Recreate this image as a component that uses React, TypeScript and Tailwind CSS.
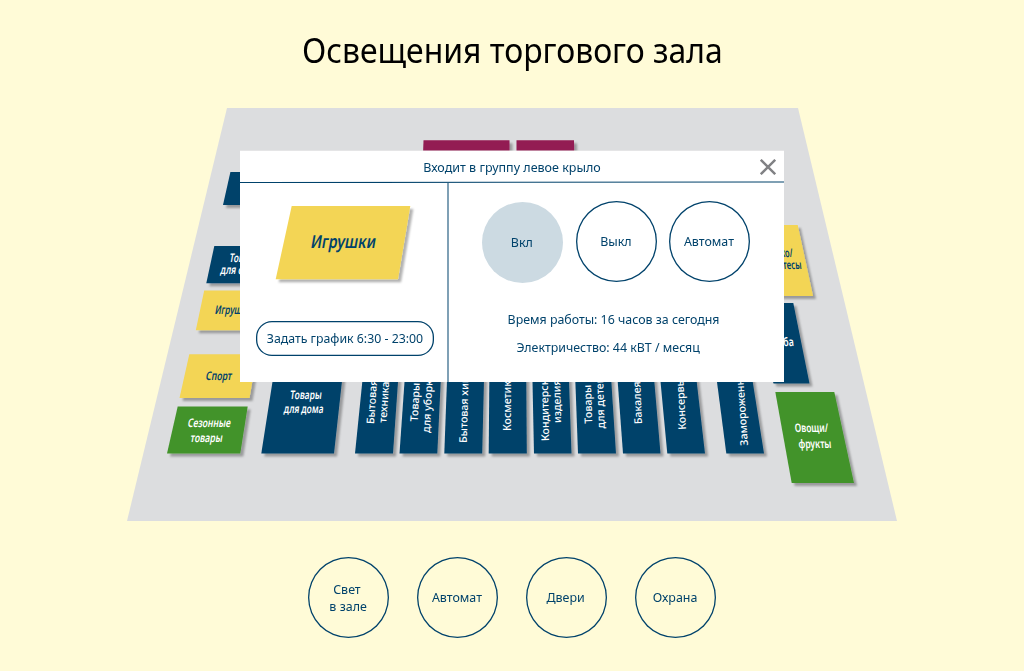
const NAVY = "#00426b";
const YELLOW = "#f3d554";
const GREEN = "#43932c";
const PLUM = "#931c52";

type Tile = { points: string; fill: string };

const tiles: Tile[] = [
  { points: "423.5,140.3 509.5,140.3 509.5,170 422.5,170", fill: PLUM },
  { points: "516.5,140.3 574,140.3 574.5,170 516.5,170", fill: PLUM },
  { points: "230.4,172 290,172 284,205 223,205", fill: NAVY },
  { points: "214.3,246 280,246 273,283.3 206.3,283.3", fill: NAVY },
  { points: "204.2,290.4 270,290.4 262,330.2 195.8,330.2", fill: YELLOW },
  { points: "189.3,354.2 257,354.2 249.5,398 179.5,398", fill: YELLOW },
  { points: "177.7,406.5 247.7,406.5 240.3,453.5 167,453.5", fill: GREEN },
  { points: "274,372 343,372 334,453.5 261.3,453.5", fill: NAVY },
  { points: "363.3,372 398.7,372 393,453.5 355,453.5", fill: NAVY },
  { points: "405.2,372 441.2,372 437.3,453.5 399.5,453.5", fill: NAVY },
  { points: "447.3,372 484.2,372 482.2,453.5 444.3,453.5", fill: NAVY },
  { points: "489.4,372 526.2,372 526.8,453.5 488.7,453.5", fill: NAVY },
  { points: "532.3,372 568.7,372 571.5,453.5 534,453.5", fill: NAVY },
  { points: "575,372 610.7,372 616,453.5 578,453.5", fill: NAVY },
  { points: "617,372 653.5,372 660.5,453.5 623,453.5", fill: NAVY },
  { points: "659.6,372 695.6,372 705,453.5 667.3,453.5", fill: NAVY },
  { points: "715.7,372 751.2,372 764,453.5 726.3,453.5", fill: NAVY },
  { points: "740,225 797.7,225 813,296 750,296", fill: YELLOW },
  { points: "750,303 793.3,303 809.5,383.5 773.5,383.5", fill: NAVY },
  { points: "775.3,392 834.3,392 854,483 791.7,483", fill: GREEN },
];

type Label = { x: number; y: number; text: string; length: number; lean: number; fill?: string; end?: boolean };

const labels: Label[] = [
  { x: 229, y: 261.7, text: "Товары", length: 30.5, lean: -10 },
  { x: 220, y: 273.9, text: "для отдыха", length: 48, lean: -10 },
  { x: 214.5, y: 313.6, text: "Игрушки", length: 37, lean: -10, fill: NAVY },
  { x: 205.3, y: 379.7, text: "Спорт", length: 26, lean: -10, fill: NAVY },
  { x: 187.2, y: 427, text: "Сезонные", length: 43, lean: -10 },
  { x: 190, y: 442, text: "товары", length: 32, lean: -10 },
  { x: 289.8, y: 398.9, text: "Товары", length: 31.5, lean: -7 },
  { x: 283.5, y: 413.2, text: "для дома", length: 39.5, lean: -7 },
  { x: 793, y: 256.5, text: "Молоко/", length: 33, lean: 6, fill: NAVY, end: true },
  { x: 802, y: 268.7, text: "деликатесы", length: 47, lean: 6, fill: NAVY, end: true },
  { x: 794, y: 346, text: "Рыба", length: 23, lean: 5, end: true },
  { x: 794.9, y: 432.2, text: "Овощи/", length: 33.5, lean: 4 },
  { x: 798.7, y: 447.7, text: "фрукты", length: 33, lean: 4 },
];

const uprights = [
  { x: 374, y: 424.3, text: "Бытовая", turn: -86 },
  { x: 386.3, y: 423, text: "техника", turn: -86 },
  { x: 417.7, y: 421.7, text: "Товары", turn: -87 },
  { x: 429.8, y: 433, text: "для уборки", turn: -87 },
  { x: 466.8, y: 443, text: "Бытовая химия", turn: -88.5 },
  { x: 511, y: 431, text: "Косметика", turn: -90 },
  { x: 549, y: 441, text: "Кондитерские", turn: -91 },
  { x: 561, y: 423, text: "изделия", turn: -91 },
  { x: 592.3, y: 423.5, text: "Товары", turn: -92 },
  { x: 604.8, y: 428.5, text: "для детей", turn: -92 },
  { x: 642, y: 424, text: "Бакалея", turn: -92.5 },
  { x: 686, y: 429.5, text: "Консервы", turn: -93 },
  { x: 748, y: 445.5, text: "Замороженные", turn: -94 },
];

function FloorPlan() {
  return (
    <svg viewBox="127 108 770 413" className="block h-[413px] w-[770px]" fontFamily="'Noto Sans', sans-serif">
      <defs>
        <filter id="tile-shadow" x="-10%" y="-10%" width="130%" height="130%">
          <feDropShadow dx="3" dy="3" stdDeviation="0.8" floodColor="#000" floodOpacity="0.3" />
        </filter>
      </defs>
      <polygon points="227,108 798,108 897,521 127,521" fill="#dcdddf" />
      {tiles.map((t) => (
        <polygon key={t.points} points={t.points} fill={t.fill} filter="url(#tile-shadow)" />
      ))}
      {labels.map((l) => (
        <text
          key={l.text + l.x}
          transform={`translate(${l.x} ${l.y}) skewX(${l.lean})`}
          fontSize="11.8"
          fontWeight="600"
          textLength={l.length}
          lengthAdjust="spacingAndGlyphs"
          textAnchor={l.end ? "end" : "start"}
          fill={l.fill ?? "#fff"}
        >
          {l.text}
        </text>
      ))}
      {uprights.map((u) => (
        <text
          key={u.text + u.x}
          transform={`translate(${u.x} ${u.y}) rotate(${u.turn})`}
          fontSize="10.6"
          fontWeight="500"
          fill="#fff"
        >
          {u.text}
        </text>
      ))}
    </svg>
  );
}

function RoundButton({ lines, active = false }: { lines: string[]; active?: boolean }) {
  return (
    <button
      className={
        active
          ? "flex size-[81px] translate-y-px flex-col items-center justify-center rounded-full bg-[#ccdae2] pr-px text-[13.4px] leading-[17px]"
          : "flex size-[81px] flex-col items-center justify-center rounded-full pr-px text-[13.4px] leading-[17px] shadow-[inset_0_0_0_1.3px_#00426b]"
      }
    >
      {lines.map((line) => (
        <span key={line} className="scale-x-[0.93] whitespace-nowrap first:not-last:pr-[3px] last:not-first:pl-px">{line}</span>
      ))}
    </button>
  );
}

function GroupDialog() {
  return (
    <div className="absolute left-[113px] top-[43px] flex h-[231px] w-[544px] flex-col bg-white shadow-[0_-0.5px_0_#ededed]">
      <header className="flex h-8 shrink-0 flex-col text-[13.4px]">
        <div className="relative flex h-[30px] items-center justify-center pt-0.5">
          <span className="scale-x-[0.935] whitespace-nowrap">Входит в группу левое крыло</span>
          <button className="absolute right-2 top-2" aria-label="Закрыть">
            <svg viewBox="0 0 16 16" className="block size-4" stroke="#808184" strokeWidth="2.4">
              <path d="M0.8 0.8L15.2 15.2M15.2 0.8L0.8 15.2" />
            </svg>
          </button>
        </div>
        <svg viewBox="0 0 544 2" className="block h-0.5 w-full">
          <line x1="-1" y1="1.6" x2="545" y2="1" stroke={NAVY} strokeWidth="1.1" />
        </svg>
      </header>
      <div className="flex grow">
        <section className="flex w-[209px] flex-col border-r-2 border-[#7fa0b5] pl-4">
          <svg viewBox="270 200 150 90" className="ml-[14px] mt-[17px] block h-[90px] w-[150px]" fontFamily="'Noto Sans', sans-serif">
            <polygon points="291.7,206 410.3,206 398,279.3 275.7,279.3" fill={YELLOW} filter="url(#tile-shadow)" />
            <text
              transform="translate(310 248) skewX(-10)"
              fontSize="18"
              fontWeight="600"
              textLength="65"
              lengthAdjust="spacingAndGlyphs"
              fill={NAVY}
            >
              Игрушки
            </text>
          </svg>
          <button className="mt-[31px] flex h-[35px] w-[178px] items-center justify-center whitespace-nowrap rounded-[16px] text-[13.4px] shadow-[inset_0_0_0_1.3px_#00426b]">
            <span className="scale-x-[0.92]">Задать график 6:30 - 23:00</span>
          </button>
        </section>
        <section className="flex grow flex-col items-center pr-px">
          <div className="mt-[18px] flex gap-[12.5px]">
            <RoundButton lines={["Вкл"]} active />
            <RoundButton lines={["Выкл"]} />
            <RoundButton lines={["Автомат"]} />
          </div>
          <p className="mr-[5px] mt-[27px] scale-x-[0.925] whitespace-nowrap text-[13.4px] leading-[20px]">Время работы: 16 часов за сегодня</p>
          <p className="mr-[15px] mt-2 scale-x-[0.925] whitespace-nowrap text-[13.4px] leading-[20px]">Электричество: 44 кВТ / месяц</p>
        </section>
      </div>
    </div>
  );
}

export default function App() {
  return (
    <main className="flex h-[671px] w-[1024px] flex-col items-center overflow-hidden bg-[#fffbd7] font-['Noto_Sans',sans-serif] text-[#00426b]">
      <h1 className="mt-[27px] h-[81px] whitespace-nowrap text-[34px] leading-[46px] text-black">
        <span className="inline-block scale-x-[0.938]">Освещения торгового зала</span>
      </h1>
      <div className="relative h-[413px] w-[770px]">
        <FloorPlan />
        <GroupDialog />
      </div>
      <nav className="mt-9 flex gap-7">
        <RoundButton lines={["Свет", "в зале"]} />
        <RoundButton lines={["Автомат"]} />
        <RoundButton lines={["Двери"]} />
        <RoundButton lines={["Охрана"]} />
      </nav>
    </main>
  );
}
